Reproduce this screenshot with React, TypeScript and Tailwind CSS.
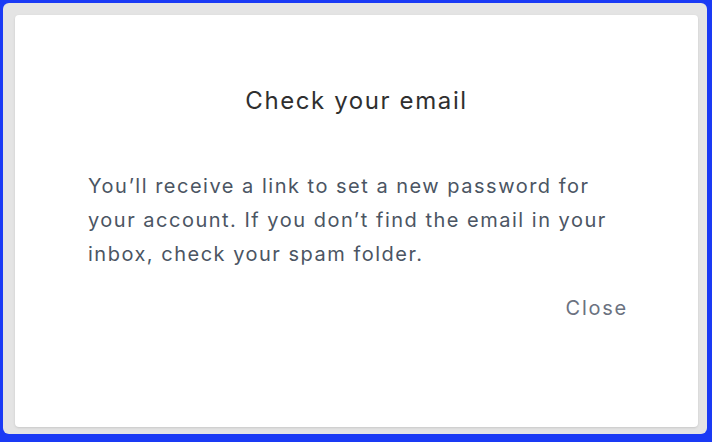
import React from 'react';

const App: React.FC = () => {
  return (
    <div className="w-[712px] h-[442px] bg-[#1a3af5] pl-[3px] pt-[3px] pr-[5px] pb-[8px]" style={{ fontFamily: 'Inter, "Liberation Sans", sans-serif' }}>
      <div className="h-full w-full rounded-md bg-[#e4e4e4] pl-3 pt-3 pr-[9px] pb-[7px] flex">
        {/* Modal card */}
        <div className="flex-1 rounded bg-white shadow-sm flex flex-col px-[70px] pt-[68px]">
          <h2 className="text-center text-[24px] leading-[36px] tracking-[1.6px] text-[#2f2f2f] font-normal">Check your email</h2>
          <p className="mt-[50px] pl-[3px] text-[20px] leading-[34px] tracking-[1.5px] text-[#4b5563]">
            You’ll receive a link to set a new password for your account. If you don’t find the email in your inbox, check your spam folder.
          </p>
          <div className="mt-5 flex justify-end">
            <button className="text-[20px] leading-[34px] tracking-[1.75px] text-[#6b7280]">Close</button>
          </div>
        </div>
      </div>
    </div>
  );
};

export default App;
